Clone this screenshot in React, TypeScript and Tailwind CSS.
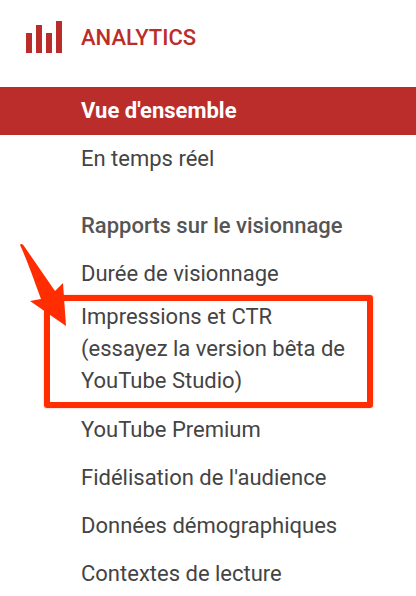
import React from 'react'

const font = "font-['Roboto',sans-serif]"

const Row = ({ label, bold }: { label: string; bold?: boolean }) => (
  <div className={`flex h-12 items-center pb-[2px] pl-[81px] text-[22px] ${bold ? 'font-medium text-[#555555]' : 'text-[#444444]'}`}>
    {label}
  </div>
)

export default function App() {
  return (
    <div className={`relative h-[596px] w-[416px] overflow-hidden bg-white ${font}`}>
      <div className="flex h-[87px] items-start">
        <svg className="ml-[26px] mt-[21px] h-8 w-9" viewBox="0 0 36 32" fill="#bb2d2a">
          <rect x="0" y="12" width="6" height="20" />
          <rect x="10" y="4" width="6" height="28" />
          <rect x="20" y="12" width="6" height="20" />
          <rect x="30" y="0" width="6" height="32" />
        </svg>
        <span className="ml-[19px] mt-[23px] text-[22px] leading-[30px] font-medium text-[#bb2d2a]">ANALYTICS</span>
      </div>
      <div className="flex h-12 items-center bg-[#bb2d2a] pb-[2px] pl-[81px] text-[22px] font-bold text-white">Vue d'ensemble</div>
      <Row label="En temps réel" />
      <div className="h-[19px]" />
      <Row label="Rapports sur le visionnage" bold />
      <Row label="Durée de visionnage" />
      <div className="mt-[3px] pb-[9px] pl-[81px] text-[22px] leading-8 text-[#444444]">
        Impressions et CTR
        <br />
        (essayez la version bêta de
        <br />
        YouTube Studio)
      </div>
      <Row label="YouTube Premium" />
      <Row label="Fidélisation de l'audience" />
      <Row label="Données démographiques" />
      <Row label="Contextes de lecture" />

      {/* annotation */}
      <div className="absolute left-[44px] top-[295px] h-[113px] w-[329px] rounded-[3px] border-[6px] border-[#ff2d00] shadow-[0_0_2px_rgba(255,80,50,0.5)]" />
      <svg className="absolute left-0 top-0" width="100" height="340" viewBox="0 0 100 340">
        <path
          d="M20 245 C21 243 23 244 24 246 L55 291 L63 283 L66 326 L30 301 L41 299 C36 286 28 262 20 245 Z"
          fill="#ff2d00"
        />
      </svg>
    </div>
  )
}
